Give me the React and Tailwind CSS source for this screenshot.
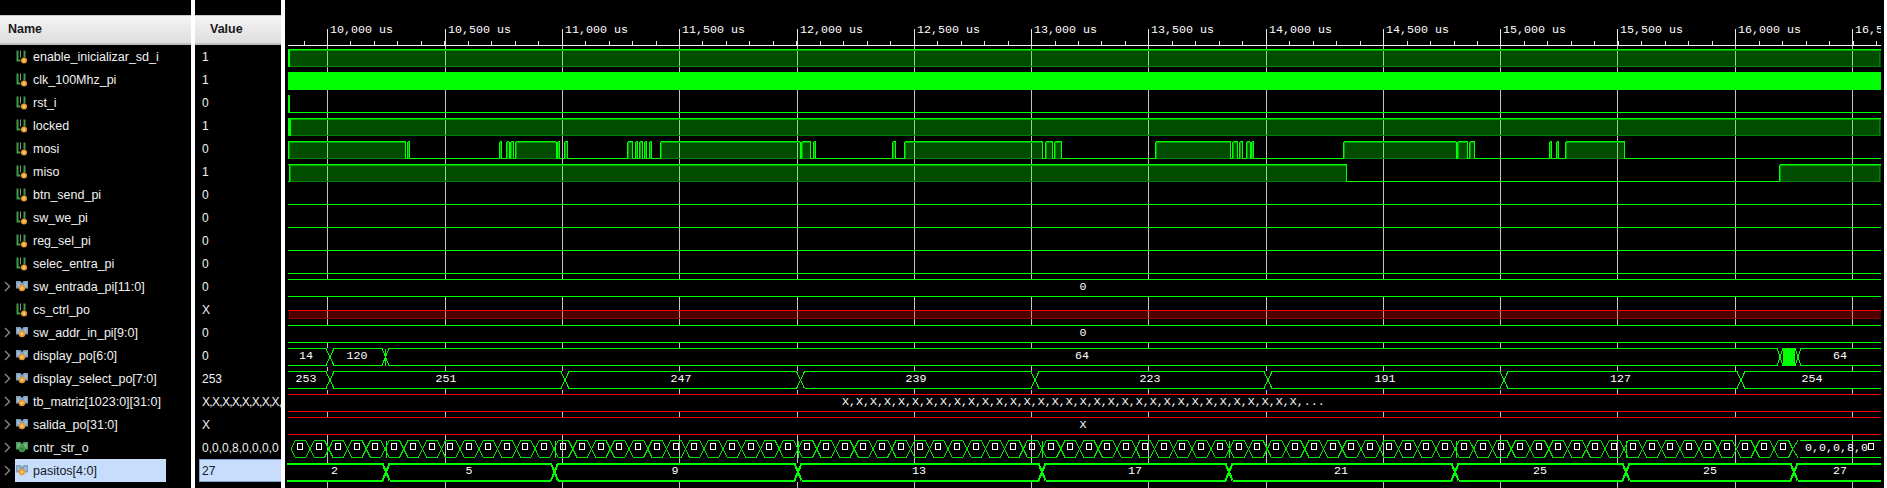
const signals = [
  { name: 'enable_inicializar_sd_i', value: '1' },
  { name: 'clk_100Mhz_pi', value: '1' },
  { name: 'rst_i', value: '0' },
  { name: 'locked', value: '1' },
  { name: 'mosi', value: '0' },
  { name: 'miso', value: '1' },
  { name: 'btn_send_pi', value: '0' },
  { name: 'sw_we_pi', value: '0' },
  { name: 'reg_sel_pi', value: '0' },
  { name: 'selec_entra_pi', value: '0' },
  { name: 'sw_entrada_pi[11:0]', value: '0', bus: true },
  { name: 'cs_ctrl_po', value: 'X' },
  { name: 'sw_addr_in_pi[9:0]', value: '0', bus: true },
  { name: 'display_po[6:0]', value: '0', bus: true },
  { name: 'display_select_po[7:0]', value: '253', bus: true },
  { name: 'tb_matriz[1023:0][31:0]', value: 'X,X,X,X,X,X,X,X,X,X', bus: true, tight: true },
  { name: 'salida_po[31:0]', value: 'X', bus: true },
  { name: 'cntr_str_o', value: '0,0,0,8,0,0,0,0', bus: true, green: true },
  { name: 'pasitos[4:0]', value: '27', bus: true, selected: true },
]

const GREEN = '#00ff00'
const RED = '#ff0000'
const X0 = 288
const X1 = 1881
const MAJOR = [
  [327.5, '10,000 us'], [445.5, '10,500 us'], [562.5, '11,000 us'], [679.5, '11,500 us'], [797.5, '12,000 us'],
  [914.5, '12,500 us'], [1031.5, '13,000 us'], [1148.5, '13,500 us'], [1266.5, '14,000 us'], [1383.5, '14,500 us'],
  [1500.5, '15,000 us'], [1617.5, '15,500 us'], [1735.5, '16,000 us'], [1852.5, '16,500 us'],
]

const MOSI = [
  [288, 405.5], [407.5, 409.5], [499.5, 501.5], [506.5, 509], [510.5, 513.5], [515.5, 556], [557.5, 559.5], [564.5, 567.5],
  [627.5, 632.5], [635.5, 637.5], [639.5, 642.5], [644.5, 646.5], [649.5, 651.5], [660.5, 800], [801.5, 810.5], [813.5, 815.5],
  [892.5, 895.5], [904.5, 1042.5], [1045.5, 1052.5], [1054.5, 1061.5], [1155.5, 1230.5], [1232.5, 1237.5], [1239.5, 1242.5],
  [1246.5, 1250], [1251.5, 1253.5], [1343.5, 1456], [1457.5, 1467.5], [1469.5, 1474.5], [1549.5, 1551.5], [1556.5, 1558.5], [1565.5, 1624.5],
]

const rowTop = (i) => 49.5 + 23 * i

function ChannelIcon({ bus, green }) {
  if (!bus) {
    return (
      <svg width="12" height="14" viewBox="0 0 12 14" className="shrink-0">
        <path d="M1.5 0.5v10h3" fill="none" stroke="#3f9a4a" strokeWidth="2" />
        <path d="M8.5 0.5v7" fill="none" stroke="#3f9a4a" strokeWidth="2" />
        <path d="M4.5 0.5v7" fill="none" stroke="#9fb89c" strokeWidth="0.8" />
        <circle cx="8" cy="10.5" r="3" fill="#ee9a30" />
        <circle cx="8" cy="10.5" r="1.2" fill="#ffd27a" />
      </svg>
    )
  }
  return (
    <svg width="12" height="14" viewBox="0 0 12 14" className="shrink-0">
      <path d="M0 1h4.5l1.5 2 1.5-2H12v7.5H8.5L6 6 3.5 8.5H0z" fill={green ? '#4f9a5c' : '#7f9fbd'} />
      <path d="M1.5 2.5h2v4h-2zM8.5 2.5h2v4h-2z" fill={green ? '#7cc088' : '#a9c2d8'} />
      <circle cx="6" cy="8" r="3.2" fill={green ? '#3f9a4a' : '#ee9a30'} />
      <circle cx="6" cy="8" r="1.3" fill={green ? '#2c7a38' : '#ffd27a'} />
    </svg>
  )
}

function NameRow({ signal }) {
  return (
    <div className="flex h-[23px] items-center">
      <div className="flex w-[15px] shrink-0 justify-center">
        {signal.bus && (
          <svg width="7" height="11" viewBox="0 0 7 11">
            <path d="M1 1l4.5 4.5L1 10" fill="none" stroke="#8a8a8a" strokeWidth="1.4" />
          </svg>
        )}
      </div>
      <div className={`flex h-[23px] w-[151px] items-center gap-[5px] pl-[1px] ${signal.selected ? 'bg-[#c8dcfb] text-[#101828]' : 'text-[#f2f2f2]'}`}>
        <ChannelIcon bus={signal.bus} green={signal.green} />
        <span className="whitespace-nowrap pt-[2px]">{signal.name}</span>
      </div>
    </div>
  )
}

function ValueRow({ signal }) {
  if (signal.selected) {
    return (
      <div className="flex h-[23px] items-center pl-[4px]">
        <div className="flex h-[23px] flex-1 items-center border border-r-0 border-[#7da2ce] bg-[#c8dcfb] pl-[2px] text-[#101828]">{signal.value}</div>
      </div>
    )
  }
  return (
    <div className={`flex h-[23px] items-center overflow-hidden whitespace-nowrap pl-[7px] text-[#f2f2f2] ${signal.tight ? 'tracking-[-0.7px]' : ''}`}>
      {signal.value}
    </div>
  )
}

function HLine({ x1 = X0, x2 = X1, y, color = GREEN, width = 1 }) {
  return <line x1={x1} x2={x2} y1={y} y2={y} stroke={color} strokeWidth={width} />
}

function Pulse({ from, to, top, dark }) {
  const bottom = top + 17
  return (
    <g>
      <rect x={from} y={top} width={to - from} height={17} fill={GREEN} fillOpacity="0.3" />
      <HLine x1={from} x2={to} y={top + 1} color="#00a000" />
      <HLine x1={from} x2={to} y={bottom} color={dark ? '#007a00' : '#008000'} />
      <HLine x1={from} x2={to} y={top} />
      {!dark && <line x1={from + 1} x2={from + 1} y1={top} y2={bottom} stroke="#00a000" />}
      {!dark && <line x1={from} x2={from} y1={top} y2={bottom} stroke={GREEN} />}
      {!dark && to < X1 - 1 && <line x1={to} x2={to} y1={top} y2={bottom + 0.5} stroke={GREEN} />}
      {to >= X1 - 1 && <line x1={to - 1.5} x2={to - 1.5} y1={top} y2={bottom} stroke="#008000" />}
    </g>
  )
}

function BusLabel({ x, row, children, anchor = 'middle' }) {
  return (
    <text x={x} y={rowTop(row) + 10.5} textAnchor={anchor} fill="#ffffff" fontSize="11.67" fontFamily="'Liberation Mono', monospace">
      {children}
    </text>
  )
}

// plain bus lane with black backing, so grid lines stop at it
function BusLane({ row, color = GREEN }) {
  const top = rowTop(row)
  return (
    <g>
      <rect x={X0} y={top} width={X1 - X0} height={17} fill="#000000" />
      <HLine y={top} color={color} />
      <HLine y={top + 17} color={color} />
    </g>
  )
}

function BusCross({ row, at, half = 4, width = 1 }) {
  const top = rowTop(row)
  const bottom = top + 17
  return (
    <g>
      <rect x={at - half} y={top - 1} width={half * 2} height={19} fill="#000000" />
      <path d={`M${at - half} ${top}L${at + half} ${bottom}M${at - half} ${bottom}L${at + half} ${top}`} stroke={GREEN} strokeWidth={width} fill="none" />
    </g>
  )
}

function CounterLane() {
  const top = rowTop(17)
  const bottom = top + 17
  const mid = top + 8.5
  const cells = Array.from({ length: 80 }, (_, n) => 291.2 + 18.77 * n)
  return (
    <g>
      {cells.map((b) => (
        <g key={b}>
          <path
            d={`M${b} ${mid}L${b + 4.2} ${top}H${b + 14.5}L${b + 18.77} ${mid}L${b + 14.5} ${bottom}H${b + 4.2}Z`}
            fill="none"
            stroke="#00e600"
            strokeWidth="1"
          />
          <rect x={Math.round(b + 6) + 0.5} y={top + 3} width={5} height={6} fill="none" stroke="#ffffff" strokeWidth="1" />
        </g>
      ))}
      {[386, 555, 798, 1042, 1229, 1456, 1626].map((x) => (
        <line key={x} x1={x} x2={x} y1={top} y2={bottom} stroke={GREEN} />
      ))}
      <HLine x1={1800} y={top} />
      <HLine x1={1800} y={bottom} />
      <path d={`M1792.5 ${mid}L1798 ${top}M1792.5 ${mid}L1798 ${bottom}`} stroke="#00e600" fill="none" />
      <BusLabel x={1805} row={17} anchor="start">0,0,0,8,0</BusLabel>
      <rect x={1868.5} y={top + 3} width={5} height={6} fill="none" stroke="#ffffff" />
    </g>
  )
}

function Waves() {
  const minors = []
  for (let x = 304; x < X1; x += 23.47) minors.push(Math.floor(x) + 0.5)

  return (
    <svg width={X1 - 285} height={488} viewBox={`285 0 ${X1 - 285} 488`} shapeRendering="crispEdges" className="block shrink-0">
      {/* ruler */}
      <HLine y={45.5} color="#f2f2f2" />
      {minors.map((x) => <line key={x} x1={x} x2={x} y1={41} y2={45} stroke="#e8e8e8" />)}
      {MAJOR.map(([x, label]) => (
        <g key={label}>
          <line x1={x} x2={x} y1={29} y2={45} stroke="#e8e8e8" />
          <text x={x + 2.5} y={32.5} fill="#ffffff" fontSize="11.67" fontFamily="'Liberation Mono', monospace">{label}</text>
        </g>
      ))}

      {/* grid */}
      {MAJOR.map(([x]) => <line key={x} x1={x} x2={x} y1={46} y2={488} stroke="#c4c4c4" />)}

      {/* single bit lanes */}
      <Pulse from={X0} to={X1} top={rowTop(0)} />
      <rect x={X0} y={49} width={2} height={18} fill={GREEN} />
      <rect x={X0} y={72} width={X1 - X0} height={18} fill={GREEN} />
      <rect x={X0} y={95} width={2} height={18} fill={GREEN} />
      <HLine y={rowTop(2) + 17} />
      <Pulse from={X0} to={X1} top={rowTop(3)} />
      <rect x={X0} y={118} width={3} height={18} fill={GREEN} />
      <HLine y={rowTop(4) + 17} />
      {MOSI.map(([from, to]) => <Pulse key={from} from={from} to={to} top={rowTop(4)} />)}
      <HLine y={rowTop(5) + 17} />
      <Pulse from={289} to={1346.5} top={rowTop(5)} />
      <HLine x1={X0} x2={290} y={rowTop(5)} />
      <Pulse from={1779.5} to={X1} top={rowTop(5)} />
      {[6, 7, 8, 9].map((i) => <HLine key={i} y={rowTop(i) + 17} />)}

      {/* buses */}
      <BusLane row={10} />
      <BusLabel x={1083} row={10}>0</BusLabel>

      <rect x={289} y={311} width={X1 - 289} height={8} fill={RED} fillOpacity="0.3" />
      <HLine y={318.5} color="#8a0000" />
      <line x1={289.5} x2={289.5} y1={311} y2={319} stroke="#8a0000" />
      <HLine y={310.5} color={RED} />

      <BusLane row={12} />
      <BusLabel x={1083} row={12}>0</BusLabel>

      <BusLane row={13} />
      <BusLabel x={306} row={13}>14</BusLabel>
      <BusCross row={13} at={330} />
      <BusLabel x={357} row={13}>120</BusLabel>
      <BusCross row={13} at={385.5} half={3.5} />
      <line x1={385.5} x2={385.5} y1={rowTop(13)} y2={rowTop(13) + 17} stroke={GREEN} />
      <BusLabel x={1082} row={13}>64</BusLabel>
      <BusCross row={13} at={1780} half={3} />
      <BusCross row={13} at={1798} half={3} />
      <rect x={1783} y={349} width={12} height={17} fill={GREEN} />
      <BusLabel x={1840} row={13}>64</BusLabel>

      <BusLane row={14} />
      {[330, 565, 800.5, 1035, 1268, 1504, 1741].map((x) => <BusCross key={x} row={14} at={x} />)}
      {[[306, '253'], [446, '251'], [681, '247'], [916, '239'], [1150, '223'], [1385, '191'], [1620.5, '127'], [1812, '254']].map(([x, t]) => (
        <BusLabel key={t} x={x} row={14}>{t}</BusLabel>
      ))}

      <BusLane row={15} color={RED} />
      <BusLabel x={842} row={15} anchor="start">{'X,'.repeat(33) + '...'}</BusLabel>

      <BusLane row={16} color={RED} />
      <BusLabel x={1083} row={16}>X</BusLabel>

      <CounterLane />

      <rect x={X0 - 1} y={rowTop(18) - 1} width={X1 - X0 + 1} height={19} fill="#000000" />
      <HLine x1={287} y={rowTop(18)} width={2} />
      <HLine x1={287} y={rowTop(18) + 17} width={2} />
      {[386, 554.5, 798, 1042, 1229, 1455, 1626, 1794].map((x) => <BusCross key={x} row={18} at={x} half={3.5} width={2} />)}
      {[[334.5, '2'], [469, '5'], [675, '9'], [919, '13'], [1135, '17'], [1341, '21'], [1540, '25'], [1710, '25'], [1840, '27']].map(([x, t]) => (
        <BusLabel key={x} x={x} row={18}>{t}</BusLabel>
      ))}
    </svg>
  )
}

export default function App() {
  return (
    <div className="flex h-[488px] w-[1887px] overflow-hidden bg-black font-['Liberation_Sans',sans-serif] text-[12.5px]">
      <div className="flex w-[191px] shrink-0 flex-col pt-[15px]">
        <div className="flex h-[30px] items-center border-t border-b-2 border-t-[#c8c8c8] border-b-[#c0c0c0] bg-gradient-to-b from-[#f4f4f4] to-[#dedede] pl-[8px] text-[12.5px] font-bold text-[#1a1a1a]">
          Name
        </div>
        {signals.map((s) => <NameRow key={s.name} signal={s} />)}
      </div>
      <div className="w-[4px] shrink-0 bg-white" />
      <div className="flex w-[86px] shrink-0 flex-col pt-[15px] text-[12px]">
        <div className="flex h-[30px] items-center border-t border-b-2 border-t-[#c8c8c8] border-b-[#c0c0c0] bg-gradient-to-b from-[#f4f4f4] to-[#dedede] pl-[15px] text-[12.5px] font-bold text-[#1a1a1a]">
          Value
        </div>
        {signals.map((s) => <ValueRow key={s.name} signal={s} />)}
      </div>
      <div className="w-[4px] shrink-0 bg-white" />
      <Waves />
      <div className="w-[3px] shrink-0" />
      <div className="w-[3px] shrink-0 bg-white" />
    </div>
  )
}
